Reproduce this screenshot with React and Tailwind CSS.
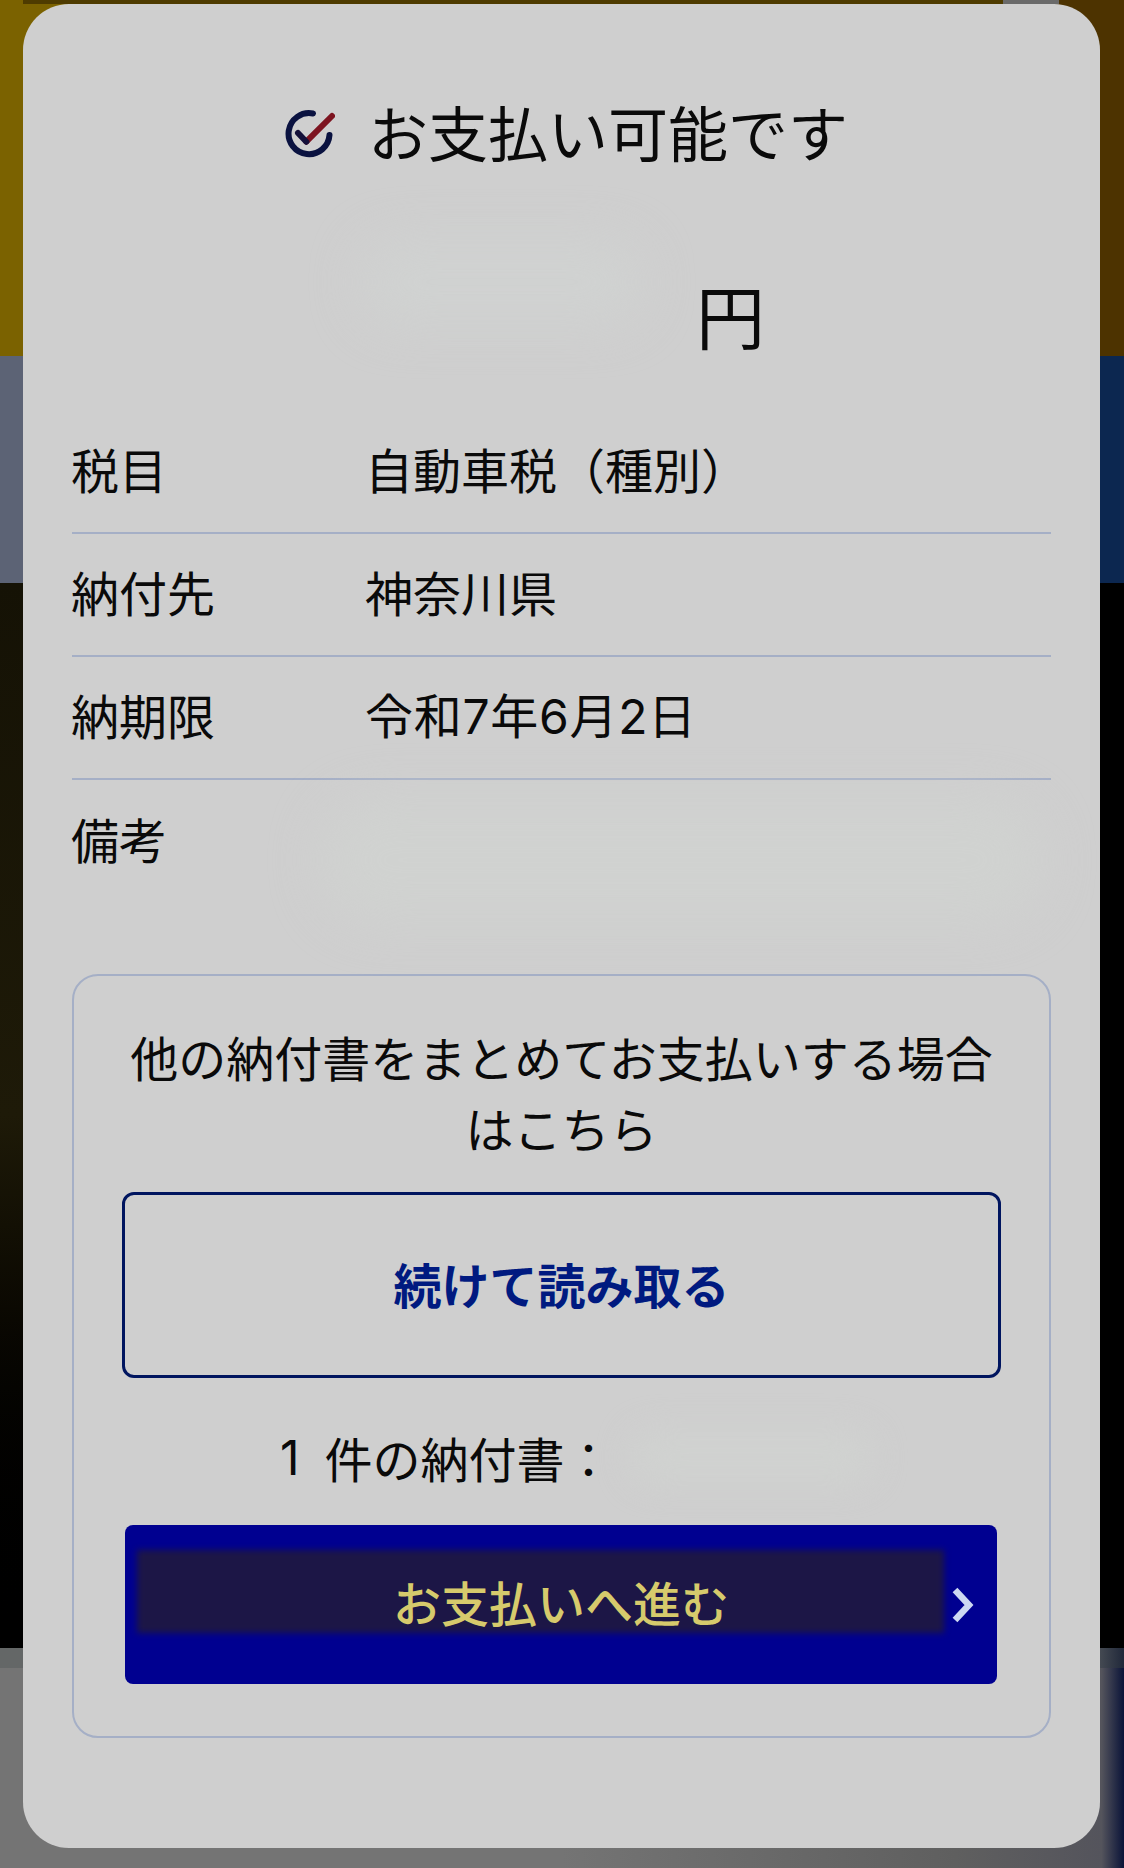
import React from 'react';

const Row = ({ label, value, last, valueClass = '' }) => (
  <div className={`flex h-[123px] items-center pb-[6px] ${last ? '' : 'border-b-2 border-[#a5afc6]'}`}>
    <div className="w-[295px] shrink-0 -ml-px">{label}</div>
    <div className={`-ml-[1px] ${valueClass}`}>{value}</div>
  </div>
);

const CheckIcon = () => (
  <svg className="mt-[10px] shrink-0" width="52" height="52" viewBox="0 0 52 52" fill="none">
    <path d="M30 3.5 A20.5 20.5 0 1 0 46.5 25" stroke="#0a1240" strokeWidth="6" strokeLinecap="round" />
    <path d="M23.3 31.7 L49 6" stroke="#7d1420" strokeWidth="6" strokeLinecap="round" />
    <path d="M15 23 L23.3 31.7" stroke="#14103a" strokeWidth="6" strokeLinecap="round" />
  </svg>
);

const App = () => {
  return (
    <div
      className="relative h-[1868px] w-[1124px] overflow-hidden bg-black text-[48px] leading-[71px] text-[#0a0a0a]"
      style={{ fontFamily: '"Noto Sans CJK JP", "Noto Sans", sans-serif' }}
    >
      {/* page behind the sheet */}
      <div className="relative h-[356px] bg-[linear-gradient(90deg,#7b6200_50%,#4d3300_50%)]">
        <div className="absolute left-[23px] top-0 h-[4px] w-[980px] bg-[#4e3b00]" />
        <div className="absolute left-[1003px] top-0 h-[4px] w-[56px] bg-[#6a6a6a]" />
      </div>
      <div className="h-[227px] bg-[linear-gradient(90deg,#5c6375_50%,#0c2750_50%)]" />
      <div className="flex h-[1065px] bg-black">
        <div className="h-full w-[23px] bg-gradient-to-b from-[#151205] via-[#1e1a08] to-black" />
      </div>
      <div className="h-[20px] bg-[linear-gradient(90deg,#646767_96%,#20283a_100%)]" />
      <div className="h-[200px] bg-[linear-gradient(90deg,#747474_50%,#5f5f5f_85%,#54545c_98%,#0a1338_100%)]" />

      <div className="absolute left-[23px] top-[4px] h-[1844px] w-[1077px] rounded-[46px] bg-[#cfcfcf] px-[49px] pt-[91px]">
        <div className="flex h-[72px] items-center justify-center gap-[33px] pl-[8px] text-[60px] leading-[72px]">
          <CheckIcon />
          <span>お支払い可能です</span>
        </div>

        <div className="relative flex h-[244px] items-center pt-[50px] pl-[624px] text-[69px] leading-[80px]">
          <div className="absolute left-[290px] top-[75px] h-[80px] w-[280px] rounded-full bg-[#d0d2d1] blur-xl" />
          <span className="relative">円</span>
        </div>

        <Row label="税目" value="自動車税（種別）" />
        <Row label="納付先" value="神奈川県" />
        <Row label="納期限" value="令和7年6月2日" valueClass="pt-[4px] tracking-[0.7px] font-['Inter','Noto_Sans_CJK_JP',sans-serif]" />
        <div className="relative">
          <div className="absolute left-[250px] top-[20px] h-[120px] w-[720px] rounded-full bg-[#d0d2d0] blur-xl" />
          <Row label="備考" value="" last />
        </div>

        <div className="mt-[71px] h-[764px] rounded-[26px] border-2 border-[#a5afc6] px-[48px] pt-[45px]">
          <p className="text-center">他の納付書をまとめてお支払いする場合はこちら</p>
          <button className="mt-[29px] flex h-[186px] w-full items-center justify-center rounded-[12px] border-[3px] border-[#00155f] pb-[3px] text-[48px] font-bold leading-[71px] text-[#001a80]">
            続けて読み取る
          </button>
          <div className="relative mt-[44px] flex h-[71px] items-center pl-[158px]">
            <span className="mr-[25px] font-['Inter',sans-serif]">1</span>
            <span>件の納付書：</span>
            <div className="absolute left-[510px] top-[10px] h-[50px] w-[240px] rounded-full bg-[#d0d2d0] blur-lg" />
          </div>
          <button className="relative mx-[3px] mt-[32px] flex h-[159px] w-[872px] items-center justify-center rounded-[8px] bg-[#000090] pb-[7px] text-[48px] font-medium leading-[71px] text-[#d6ca6c]">
            <div className="absolute left-[12px] top-[25px] h-[83px] w-[807px] bg-[#1c1646] blur-[3px]" />
            <span className="relative">お支払いへ進む</span>
            <svg className="absolute left-[826px] top-[62px]" width="24" height="36" viewBox="0 0 24 36" fill="none">
              <path d="M4 3 L18 18 L4 33" stroke="#cdd8f2" strokeWidth="6.5" />
            </svg>
          </button>
        </div>
      </div>
    </div>
  );
};

export default App;
